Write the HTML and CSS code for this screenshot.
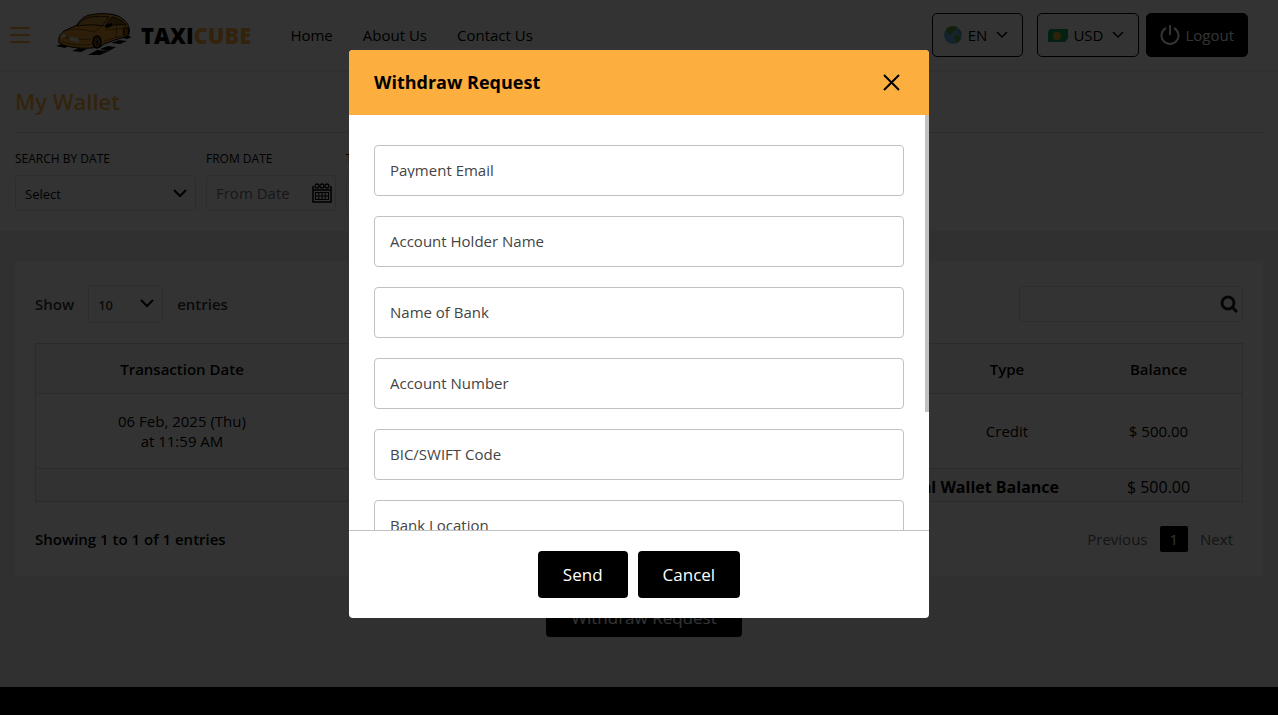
FILE: index.html
```html
<!DOCTYPE html>
<html lang="en">
<head>
  <meta charset="UTF-8" />
  <meta name="viewport" content="width=device-width, initial-scale=1.0"/>
  <title>My Wallet | TaxiCube</title>
  <link rel="stylesheet" href="styles.css">
</head>
<body>
  <header class="topbar">
    <button class="menu-btn" aria-label="Menu"><span></span><span></span><span></span></button>
    <a class="logo" href="#">
      <svg width="76" height="44" viewBox="0 0 76 44">
        <!-- checkered ground -->
        <path d="M0 33l6-2 8 1-5 3zM16 38l7-3 8 1-6 3zM32 42l9-5 12 1-9 4zM44 36l8-3 8 1-7 4zM55 30l8-3 8 1-7 3zM67 25l5-2 4 1-5 2z" fill="#000"/>
        <!-- body -->
        <path d="M3 30C2 25 4 21 8 18L21 12C24 7 28 3 34 2c10-2 20-2 28 1 6 3 10 7 11 12 1 3 0 6-1 8l-13 4-11 4-4 3-9 1c-12 1-25-1-32-5z" fill="#e09530" stroke="#000" stroke-width="1"/>
        <!-- windows -->
        <path d="M21 13C25 7 30 5 35 4c6-1 12-1 18 0l-7 9c-8-2-17-1-25 0z" fill="#c98f3d" stroke="#000" stroke-width=".8"/>
        <path d="M50 12l6-8c6 1 11 4 14 8-6-1-14 0-20 2z" fill="#8a6026" stroke="#000" stroke-width=".8"/>
        <path d="M61 5l-1 20M8 18c9-3 20-2 30 1M38 19l8-6 12-1M4 28c10 4 22 5 32 3M5 23c10 3 20 4 30 3M48 28l21-6M49 17l22-2" fill="none" stroke="#5a3b0c" stroke-width=".7"/>
        <path d="M13 24l9 1 1 4-8-1z" fill="#ddd"/>
        <path d="M5 22l4-1 1 3-5 1z" fill="#ddd"/>
        <path d="M49 14l2-3 5-1v3l-5 2z" fill="#000"/>
        <ellipse cx="41" cy="29" rx="4" ry="6" fill="#8a6026" stroke="#000" stroke-width="1.500"/>
        <path d="M41 24v10M38 27l6 5M44 26l-6 6" stroke="#000" stroke-width=".7"/>
        <ellipse cx="70" cy="19" rx="2.500" ry="5" fill="#8a6026" stroke="#000" stroke-width="1"/>
      </svg>
      <span class="logo-text">TAXI<b>CUBE</b></span>
    </a>
    <nav class="main-nav">
      <a href="#">Home</a>
      <a href="#">About Us</a>
      <a href="#">Contact Us</a>
    </nav>
    <div class="top-actions">
      <button class="pick pick-lang">
        <svg width="20" height="20" viewBox="0 0 20 20"><circle cx="10" cy="10" r="9" fill="#6fb0e6"/><path d="M3 4c3-3 8-4 11-2l-1 3-3 1-1 3-3 1-2-3zM11 10l5 1 2 3-4 4-2-3zM16 4l2 3-1 2-2-2z" fill="#5f9f3a"/></svg>
        EN
        <svg class="chev" width="12" height="8" viewBox="0 0 12 8"><path d="M1 1l5 5 5-5"/></svg>
      </button>
      <button class="pick pick-cur">
        <svg width="20" height="13" viewBox="0 0 20 13"><path d="M2 0h18v9l-3 4H0V3z" fill="#12a05c"/><circle cx="9" cy="7" r="4" fill="#e0b020"/></svg>
        USD
        <svg class="chev" width="12" height="8" viewBox="0 0 12 8"><path d="M1 1l5 5 5-5"/></svg>
      </button>
      <button class="logout">
        <svg width="20" height="20" viewBox="0 0 20 20"><path d="M6 3a8.500 8.500 0 1 0 8 0M10 0v10" fill="none" stroke="#fff" stroke-width="2"/></svg>
        Logout
      </button>
    </div>
  </header>

  <section class="page-head">
    <h1>My Wallet</h1>
    <form class="filters">
      <div class="filter filter-select">
        <label for="searchBy">Search by date</label>
        <div class="select-wrap">
          <select id="searchBy"><option>Select</option></select>
          <svg class="chev" width="14" height="9" viewBox="0 0 14 9"><path d="M1 1l6 6 6-6"/></svg>
        </div>
      </div>
      <div class="filter filter-date">
        <label for="fromDate">From date</label>
        <div class="date-wrap">
          <input id="fromDate" type="text" placeholder="From Date">
          <svg width="20" height="20" viewBox="0 0 20 20"><path d="M1 3v16h18V3M1 7h18" fill="none" stroke="#000" stroke-width="1.500"/><path d="M3 9.500h14M3 13h14M3 16.500h14M3.500 9v8M6.800 9v8M10 9v8M13.200 9v8M16.500 9v8" fill="none" stroke="#000" stroke-width="1"/><g fill="#fff" stroke="#000" stroke-width="1.300"><circle cx="5" cy="3" r="2"/><circle cx="10" cy="3" r="2"/><circle cx="15" cy="3" r="2"/></g></svg>
        </div>
      </div>
      <div class="filter filter-date">
        <label for="toDate">To date</label>
        <div class="date-wrap">
          <input id="toDate" type="text" placeholder="To Date">
        </div>
      </div>
    </form>
  </section>

  <main class="content">
    <div class="card">
      <div class="table-tools">
        <label for="pageSize">Show</label>
        <div class="select-wrap size-select">
          <select id="pageSize"><option>10</option></select>
          <svg class="chev" width="14" height="9" viewBox="0 0 14 9"><path d="M1 1l6 6 6-6"/></svg>
        </div>
        <span>entries</span>
        <div class="search">
          <input type="text" aria-label="Search">
          <svg width="18" height="18" viewBox="0 0 18 18"><circle cx="8" cy="8" r="6"/><path d="M12 12l5 5"/></svg>
        </div>
      </div>

      <table>
        <colgroup><col class="c-date"><col><col class="c-amount"><col class="c-type"><col class="c-balance"></colgroup>
        <thead>
          <tr><th>Transaction Date</th><th>Description</th><th>Amount</th><th>Type</th><th>Balance</th></tr>
        </thead>
        <tbody>
          <tr><td>06 Feb, 2025 (Thu)<br>at 11:59 AM</td><td>Wallet Credit</td><td>$ 500.00</td><td>Credit</td><td>$ 500.00</td></tr>
        </tbody>
        <tfoot>
          <tr><td class="total" colspan="4">Total Wallet Balance</td><td>$ 500.00</td></tr>
        </tfoot>
      </table>

      <div class="table-foot">
        <span class="info">Showing 1 to 1 of 1 entries</span>
        <div class="pager">
          <a href="#">Previous</a>
          <a class="current" href="#">1</a>
          <a href="#">Next</a>
        </div>
      </div>
    </div>
    <button class="btn withdraw-btn">Withdraw Request</button>
  </main>

  <footer class="site-footer"></footer>

  <div class="overlay">
    <form class="modal" role="dialog" aria-labelledby="modalTitle">
      <div class="modal-head">
        <h2 id="modalTitle">Withdraw Request</h2>
        <button type="button" class="close" aria-label="Close">
          <svg width="17" height="17" viewBox="0 0 17 17"><path d="M1 1l15 15M16 1L1 16"/></svg>
        </button>
      </div>
      <div class="modal-scroll">
        <div class="modal-body">
          <div class="field"><input id="email" type="text"><label for="email">Payment Email</label></div>
          <div class="field"><input id="holder" type="text"><label for="holder">Account Holder Name</label></div>
          <div class="field"><input id="bank" type="text"><label for="bank">Name of Bank</label></div>
          <div class="field"><input id="account" type="text"><label for="account">Account Number</label></div>
          <div class="field"><input id="swift" type="text"><label for="swift">BIC/SWIFT Code</label></div>
          <div class="field"><input id="location" type="text"><label for="location">Bank Location</label></div>
          <div class="field"><input id="amount" type="text"><label for="amount">Amount</label></div>
        </div>
        <div class="scroll-thumb"></div>
      </div>
      <div class="modal-foot">
        <button type="button" class="btn">Send</button>
        <button type="button" class="btn">Cancel</button>
      </div>
    </form>
  </div>
</body>
</html>
```
FILE: styles.css
```css
* {
  box-sizing: border-box;
}
body {
  margin: 0;
  min-height: 100vh;
  display: flex;
  flex-direction: column;
  overflow: hidden;
  font-family: 'Open Sans', 'Noto Sans', sans-serif;
  font-size: 15px;
  line-height: 20px;
  color: #000;
  background: #efefef;
}
a {
  color: inherit;
  text-decoration: none;
}
button, input, select {
  font: inherit;
  color: inherit;
}
button {
  cursor: pointer;
}
svg {
  display: block;
  flex: none;
}
.chev {
  fill: none;
  stroke: #000;
  stroke-width: 2;
}

/* header */
.topbar {
  display: flex;
  align-items: center;
  height: 70px;
  padding: 0 30px 0 10px;
  background: #fff;
  box-shadow: 0 1px 3px rgba(0,0,0,0.15);
  position: relative;
  font-weight: 500;
}
.menu-btn {
  display: flex;
  flex-direction: column;
  gap: 5px;
  width: 20px;
  padding: 0;
  border: none;
  background: none;
}
.menu-btn span {
  height: 2px;
  background: #fcaf3e;
}
.logo {
  display: flex;
  align-items: center;
  gap: 9px;
  margin-left: 26px;
}
.logo-text {
  font-size: 22px;
  font-weight: 800;
}
.logo-text b {
  font-weight: 800;
  color: #fcaf3e;
}
.main-nav {
  display: flex;
  gap: 30px;
  margin-left: 39px;
}
.top-actions {
  display: flex;
  margin-left: auto;
}
.pick, .logout {
  display: flex;
  align-items: center;
  height: 44px;
  border: 1px solid #000;
  border-radius: 5px;
  background: #fff;
}
.pick {
  gap: 5px;
  padding: 0 14px 0 10px;
}
.pick .chev {
  margin-left: 4px;
  stroke-width: 1.5;
}
.pick-lang {
  margin-right: 14px;
}
.pick-cur {
  margin-right: 7px;
}
.logout {
  gap: 5px;
  padding: 0 13px;
  background: #000;
  color: #fff;
}

/* title and filters */
.page-head {
  padding: 18px 15px 20px;
  background: #fff;
}
h1 {
  margin: 0 0 16px;
  padding-bottom: 17px;
  border-bottom: 1px solid #ddd;
  font-size: 22px;
  line-height: 27px;
  font-weight: 600;
  color: #fcaf3e;
}
.filters {
  display: flex;
  gap: 10px;
}
.filter label {
  display: block;
  margin-bottom: 6px;
  font-size: 12px;
  text-transform: uppercase;
}
.filter-select {
  width: 181px;
}
.filter-date {
  width: 130px;
}
.select-wrap, .date-wrap, .search {
  position: relative;
}
.select-wrap select, .date-wrap input, .search input {
  width: 100%;
  height: 36px;
  padding: 0 9px;
  border: 1px solid #e2e2e2;
  border-radius: 3px;
  background: #fff;
}
.select-wrap select {
  appearance: none;
  padding-top: 2px;
  font-size: 13px;
}
.select-wrap .chev {
  position: absolute;
  right: 9px;
  top: 14px;
  pointer-events: none;
}
.date-wrap input::placeholder {
  color: #757575;
}
.date-wrap svg {
  position: absolute;
  right: 4px;
  top: 8px;
}

/* transactions */
.content {
  padding: 30px 15px 50px;
  text-align: center;
}
.card {
  padding: 24px 20px;
  background: #fff;
}
.table-tools {
  display: flex;
  align-items: center;
  gap: 14px;
  margin-bottom: 20px;
  font-weight: 600;
  color: #333;
}
.size-select {
  width: 75px;
}
.size-select select {
  height: 38px;
}
.search {
  width: 224px;
  margin-left: auto;
}
.search svg {
  position: absolute;
  right: 5px;
  top: 9px;
  fill: none;
  stroke: #222;
  stroke-width: 3;
}
table {
  width: 100%;
  table-layout: fixed;
  border: 1px solid #d5d5d5;
  border-spacing: 0;
}
.c-date {
  width: 292px;
}
.c-amount {
  width: 150px;
}
.c-type {
  width: 136px;
}
.c-balance {
  width: 167px;
}
th {
  padding: 15px 14px 14px;
  font-weight: 600;
  background: #fafafa;
}
th, tbody td {
  border-bottom: 1px solid #d5d5d5;
}
tbody td {
  padding: 17px;
}
tfoot td {
  padding: 8px 16px 4px;
  font-size: 16px;
  background: #f7f7f7;
}
.total {
  text-align: right;
  font-weight: 700;
}
.table-foot {
  display: flex;
  align-items: center;
  justify-content: space-between;
  margin-top: 24px;
}
.info {
  font-weight: 600;
}
.pager {
  display: flex;
  align-items: center;
  gap: 12px;
  padding-right: 10px;
  color: #666;
}
.pager .current {
  padding: 3px 10px;
  border-radius: 2px;
  background: #000;
  color: #fff;
}
.btn {
  height: 47px;
  padding: 1px 25px 0;
  border: none;
  border-radius: 4px;
  background: #000;
  color: #fff;
  font-size: 17px;
  font-weight: 500;
}
.withdraw-btn {
  height: 40px;
  margin: 21px 0 0 10px;
}
.site-footer {
  flex: 1;
  min-height: 28px;
  background: #000;
}

/* withdraw popup */
.overlay {
  position: fixed;
  inset: 0;
  display: flex;
  justify-content: center;
  align-items: flex-start;
  padding-top: 50px;
  background: rgba(0,0,0,0.8);
}
.modal {
  width: 580px;
  max-width: 95%;
  border-radius: 4px;
  background: #fff;
  overflow: hidden;
}
.modal-head {
  display: flex;
  align-items: center;
  justify-content: space-between;
  height: 65px;
  padding: 0 29px 0 25px;
  background: #fcaf3e;
}
h2 {
  margin: 0;
  padding-bottom: 2px;
  font-size: 18px;
  font-weight: 700;
}
.close {
  padding: 0;
  border: none;
  background: none;
}
.close svg {
  fill: none;
  stroke: #000;
  stroke-width: 2;
}
.modal-scroll {
  position: relative;
}
.modal-body {
  max-height: 58vh;
  padding: 30px 25px 52px;
  overflow-y: auto;
  scrollbar-width: none;
}
.scroll-thumb {
  position: absolute;
  top: 0;
  right: 0;
  width: 4px;
  height: 297px;
  background: #c1c1c1;
}
.field {
  position: relative;
  margin-bottom: 20px;
}
.field input {
  display: block;
  width: 100%;
  height: 51px;
  padding: 0 15px;
  border: 1px solid #c1c1c1;
  border-radius: 4px;
}
.field label {
  position: absolute;
  left: 16px;
  top: 17px;
  line-height: 16px;
  overflow: hidden;
  color: #444;
}
.modal-foot {
  display: flex;
  justify-content: center;
  gap: 10px;
  padding: 20px;
  border-top: 1px solid #c1c1c1;
}
```
